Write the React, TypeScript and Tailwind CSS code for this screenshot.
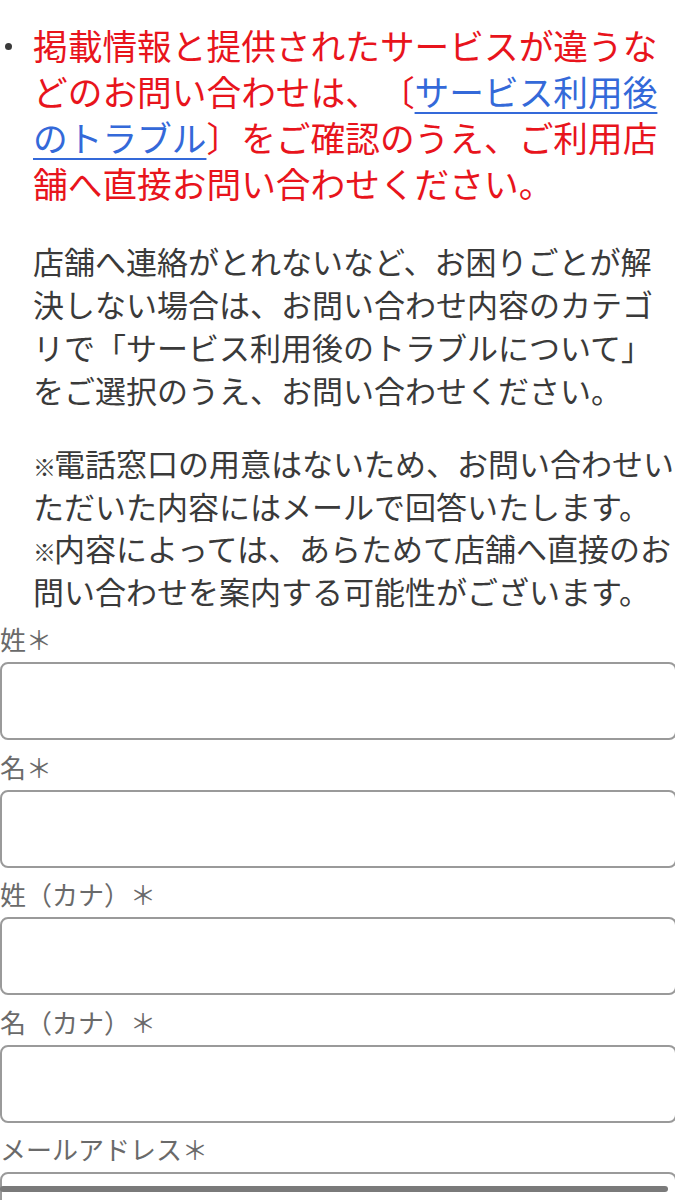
const fields = ["姓＊", "名＊", "姓（カナ）＊", "名（カナ）＊"];

const Mark = () => (
  <span className="inline-block w-[21px] text-[23px] leading-none">※</span>
);

const App = () => {
  return (
    <div className="w-[675px] h-[1200px] overflow-hidden bg-white font-['Noto_Sans_CJK_JP','Noto_Sans',sans-serif] [text-spacing-trim:space-all]">
      {/* Notice */}
      <div className="flex pt-[22px]">
        <div className="w-[33px] shrink-0">
          <div className="ml-[5px] mt-[21px] h-[7px] w-[7px] rounded-full bg-[#3a3a3a]" />
        </div>
        <p className="whitespace-nowrap text-[34.7px] leading-[46px] text-[#e8141c]">
          掲載情報と提供されたサービスが違うな
          <br />
          どのお問い合わせは、〔
          <a className="text-[#3469d9] underline decoration-2 underline-offset-[6px]">
            サービス利用後
            <br />
            のトラブル
          </a>
          〕をご確認のうえ、ご利用店
          <br />
          舗へ直接お問い合わせください。
        </p>
      </div>

      <div className="pl-[33px] text-[31px] leading-[43px] text-[#3a3a3a] whitespace-nowrap">
        <p className="mt-[33px]">
          店舗へ連絡がとれないなど、お困りごとが解
          <br />
          決しない場合は、お問い合わせ内容のカテゴ
          <br />
          リで「サービス利用後のトラブルについて」
          <br />
          をご選択のうえ、お問い合わせください。
        </p>
        <p className="mt-[31px] leading-[42.5px]">
          <Mark />
          電話窓口の用意はないため、お問い合わせい
          <br />
          ただいた内容にはメールで回答いたします。
          <br />
          <Mark />
          内容によっては、あらためて店舗へ直接のお
          <br />
          問い合わせを案内する可能性がございます。
        </p>
      </div>

      {/* Form */}
      <form className="mt-[9px] flex flex-col">
        {fields.map((label) => (
          <label key={label} className="mb-[8.5px] flex flex-col">
            <span className="mb-[5px] text-[26px] leading-[36px] text-[#6a6a6a]">
              {label}
            </span>
            <input
              type="text"
              className="h-[78px] w-[677px] rounded-[8px] border-2 border-[#9a9a9a] bg-white"
            />
          </label>
        ))}
        <label className="flex flex-col">
          <span className="mb-[5px] text-[26px] leading-[36px] text-[#6a6a6a]">
            メールアドレス＊
          </span>
          <div className="relative">
            <input
              type="email"
              className="h-[78px] w-[677px] rounded-[8px] border-2 border-[#9a9a9a] bg-white"
            />
            <div className="absolute left-0 top-[14px] h-[6px] w-[668px] rounded-full bg-[#7a7a7a]" />
          </div>
        </label>
      </form>
    </div>
  );
};

export default App;
